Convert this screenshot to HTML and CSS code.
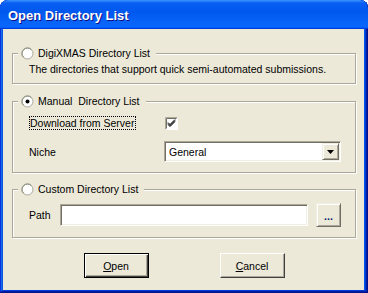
FILE: index.html
```html
<!DOCTYPE html>
<html lang="en">
<head>
  <meta charset="UTF-8" />
  <title>Open Directory List</title>
  <link rel="stylesheet" href="styles.css">
</head>
<body>

<div class="window">
  <div class="titlebar">Open Directory List</div>

  <div class="client">
    <div class="group g1">
      <div class="legend">
        <svg class="radio" width="13" height="13" viewBox="0 0 13 13">
          <circle cx="6.5" cy="6.5" r="5.5" fill="#fff" stroke="#a7a697" />
          <path d="M2.6 10.4 A5.5 5.5 0 0 1 10.4 2.6" fill="none" stroke="#8a897d" />
        </svg>
        <span>DigiXMAS Directory List</span>
      </div>
      <p class="desc">The directories that support quick semi-automated submissions.</p>
    </div>

    <div class="group g2">
      <div class="legend">
        <svg class="radio" width="13" height="13" viewBox="0 0 13 13">
          <circle cx="6.5" cy="6.5" r="5.5" fill="#fff" stroke="#a7a697" />
          <path d="M2.6 10.4 A5.5 5.5 0 0 1 10.4 2.6" fill="none" stroke="#8a897d" />
          <circle cx="6.5" cy="6.5" r="2" fill="#000" />
        </svg>
        <span>Manual&nbsp; Directory List</span>
      </div>

      <div class="row first">
        <span class="label"><span class="focus">Download from Server</span></span>
        <svg class="check" width="13" height="13" viewBox="0 0 13 13">
          <rect x="0" y="0" width="13" height="13" fill="#fff" />
          <path d="M0.5 12.5 V0.5 H12.5" fill="none" stroke="#aca899" />
          <path d="M1.5 11.5 V1.5 H11.5" fill="none" stroke="#716f64" />
          <path d="M3 5.5 L5 7.5 L10 2.5 M3 6.5 L5 8.5 L10 3.5 M3 7.5 L5 9.5 L10 4.5" fill="none" stroke="#000" />
        </svg>
      </div>

      <div class="row second">
        <span class="label">Niche</span>
        <div class="select">
          <span class="value">General</span>
          <span class="drop">
            <svg width="7" height="4" viewBox="0 0 7 4"><polygon points="0,0 7,0 3.5,4" fill="#000" /></svg>
          </span>
        </div>
      </div>
    </div>

    <div class="group g3">
      <div class="legend">
        <svg class="radio" width="13" height="13" viewBox="0 0 13 13">
          <circle cx="6.5" cy="6.5" r="5.5" fill="#fff" stroke="#a7a697" />
          <path d="M2.6 10.4 A5.5 5.5 0 0 1 10.4 2.6" fill="none" stroke="#8a897d" />
        </svg>
        <span>Custom Directory List</span>
      </div>

      <div class="row path-row">
        <span class="label short">Path</span>
        <div class="field"></div>
        <div class="browse">...</div>
      </div>
    </div>

    <div class="buttons">
      <div class="btn default"><u>O</u>pen</div>
      <div class="btn"><u>C</u>ancel</div>
    </div>
  </div>
</div>

</body>
</html>
```

FILE: styles.css
```css
body {
  margin: 0;
  background: #fff;
  font-family: "Liberation Sans", Arial, sans-serif;
  font-size: 10.5px;
  color: #000;
}

.window {
  width: 368px;
  height: 293px;
  display: flex;
  flex-direction: column;
  background: #0054e3;
  border-radius: 8px 8px 0 0;
  overflow: hidden;
  box-shadow: inset -1px -1px #00138c, inset 1px 1px #0831d9,
    inset -2px -2px #001ea0, inset 2px 2px #166aee,
    inset -3px -3px #003bda, inset 3px 3px #0855dd;
}

.titlebar {
  height: 29px;
  box-sizing: border-box;
  display: flex;
  align-items: center;
  padding: 2px 0 0 8px;
  border-radius: 8px 8px 0 0;
  background: linear-gradient(180deg, #3d95ff, #0a5ff2 10%, #0058ee 40%, #0a66fa 85%, #0a66fa 92%, #005bff 95%, #003dd7 97%, #003dd7);
  color: #fff;
  font-weight: bold;
  font-size: 13px;
  text-shadow: 1px 1px #0f1089;
}

.client {
  flex: 1;
  margin: 0 4px 3px 3px;
  padding: 24px 8px 0 9px;
  background: #ece9d8;
}

.group {
  border: 1px solid #aca899;
  box-shadow: inset 1px 1px #fff, 1px 1px #fff;
}

.g2 {
  margin-top: 17px;
}

.g3 {
  margin-top: 16px;
}

.legend {
  display: flex;
  align-items: center;
  width: max-content;
  height: 14px;
  margin: -8px 0 0 5px;
  padding: 0 6px 0 3px;
  background: #ece9d8;
}

.radio {
  display: block;
  margin-right: 4px;
}

.desc {
  margin: 3px 0 7px 16px;
  line-height: 13px;
}

.row {
  display: flex;
  align-items: center;
  padding-left: 16px;
}

.row.first {
  margin-top: 8px;
  height: 14px;
}

.row.second {
  margin-top: 11px;
  margin-bottom: 10px;
}

.label {
  width: 135px;
  line-height: 12px;
}

.label.short {
  width: 31px;
}

.focus {
  display: inline-block;
  border: 1px dotted #000;
  padding-right: 1px;
}

.check {
  display: block;
  margin-left: 1px;
}

.select,
.field {
  box-sizing: border-box;
  background: #fff;
  border: 1px solid;
  border-color: #aca899 #fff #fff #aca899;
  box-shadow: inset 1px 1px #716f64, inset -1px -1px #f1efe2;
}

.select {
  width: 177px;
  height: 21px;
  padding: 1px;
  display: flex;
  align-items: center;
}

.value {
  flex: 1;
  padding-left: 3px;
}

.drop,
.browse,
.btn {
  box-sizing: border-box;
  background: #ece9d8;
  border: 1px solid;
  border-color: #f1efe2 #716f64 #716f64 #f1efe2;
  box-shadow: inset 1px 1px #fff, inset -1px -1px #aca899;
  display: flex;
  align-items: center;
  justify-content: center;
}

.drop {
  width: 17px;
  height: 17px;
}

.drop svg {
  display: block;
}

.path-row {
  margin-top: 7px;
  margin-bottom: 10px;
  height: 24px;
}

.field {
  width: 248px;
  height: 22px;
}

.browse {
  width: 25px;
  height: 24px;
  margin-left: 8px;
  align-items: flex-end;
  padding-bottom: 6px;
  line-height: 8px;
  font-weight: bold;
  color: #0a246a;
}

.buttons {
  display: flex;
  justify-content: center;
  gap: 71px;
  margin-top: 15px;
}

.btn {
  width: 65px;
  height: 25px;
  border-color: #fff #404040 #404040 #fff;
  box-shadow: inset -1px -1px #aca899;
}

.btn.default {
  border-color: #000;
  box-shadow: inset 1px 1px #fff, inset -1px -1px #404040, inset -2px -2px #aca899;
}
```
